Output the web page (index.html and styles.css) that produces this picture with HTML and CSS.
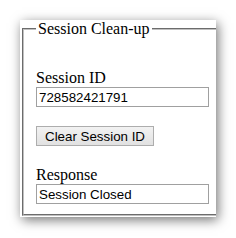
FILE: index.html
```html
<!DOCTYPE html>
<html lang="en">

<head>
  <meta charset="UTF-8">
  <meta name="viewport" content="width=device-width, initial-scale=1.0">
  <title>Session Clean-up</title>
  <link rel="stylesheet" href="styles.css">
</head>

<body>
  <div class="frame">
    <fieldset class="cleanup">
      <legend>Session Clean-up</legend>

      <div class="form-group first">
        <label for="sessionId">Session ID</label>
        <input type="text" id="sessionId" value="728582421791">
      </div>

      <div class="form-group">
        <button type="button" class="btn" id="clearSession">Clear Session ID</button>
      </div>

      <div class="form-group last">
        <label for="response">Response</label>
        <input type="text" id="response" value="Session Closed">
      </div>
    </fieldset>
  </div>
</body>

</html>
```

FILE: styles.css
```css
* {
  box-sizing: border-box;
}

body {
  margin: 0;
  padding: 20px;
  background: #fff;
  font-family: 'Liberation Serif', 'Times New Roman', serif;
  font-size: 16px;
  color: #000;
}

.frame {
  width: 196px;
  height: 197px;
  background: #fff;
  overflow: hidden;
  box-shadow: 2px 3px 11px rgba(0, 0, 0, 0.55);
}

.cleanup {
  width: 230px;
  margin: 0 0 0 2px;
  padding: 0 12px 10px 12px;
  border: 2px groove #c0c0c0;
}

.cleanup legend {
  padding: 0 2px;
  line-height: 18px;
}

.form-group label {
  display: block;
  line-height: 18px;
}

.form-group input {
  display: block;
  width: 173px;
  height: 20px;
  margin: 0;
  padding: 0 2px;
  border: 1px solid #a0a0a0;
  font-family: 'Liberation Sans', Arial, sans-serif;
  font-size: 13.33px;
  color: #000;
}

.form-group.first {
  margin-top: 31px;
}

.form-group + .form-group {
  margin-top: 19px;
}

.form-group.last {
  margin-top: 20px;
}

.btn {
  height: 20px;
  padding: 0 8px;
  border: 1px solid #adadad;
  background: linear-gradient(#f2f2f2, #e1e1e1);
  font-family: 'Liberation Sans', Arial, sans-serif;
  font-size: 13.33px;
  color: #000;
}
```
